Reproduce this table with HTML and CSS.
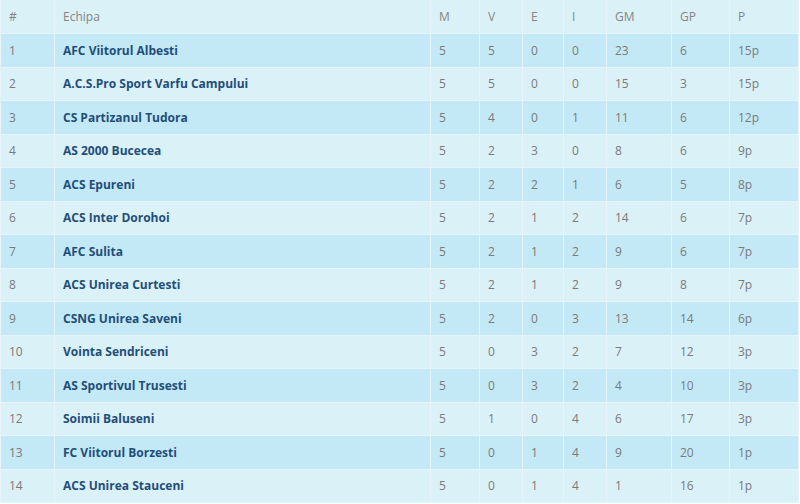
FILE: index.html
```html
<!DOCTYPE html>
<html>
<head>
<meta charset="utf-8">
<link rel="stylesheet" href="styles.css">
</head>
<body>
<table class="standings">
<colgroup>
<col class="c-pos"><col class="c-team"><col class="c-m"><col class="c-v"><col class="c-e"><col class="c-i"><col class="c-gm"><col class="c-gp"><col class="c-p">
</colgroup>
<thead>
<tr><th>#</th><th>Echipa</th><th>M</th><th>V</th><th>E</th><th>I</th><th>GM</th><th>GP</th><th>P</th></tr>
</thead>
<tbody>
<tr><td>1</td><td class="team">AFC Viitorul Albesti</td><td>5</td><td>5</td><td>0</td><td>0</td><td>23</td><td>6</td><td>15p</td></tr>
<tr><td>2</td><td class="team">A.C.S.Pro Sport Varfu Campului</td><td>5</td><td>5</td><td>0</td><td>0</td><td>15</td><td>3</td><td>15p</td></tr>
<tr><td>3</td><td class="team">CS Partizanul Tudora</td><td>5</td><td>4</td><td>0</td><td>1</td><td>11</td><td>6</td><td>12p</td></tr>
<tr><td>4</td><td class="team">AS 2000 Bucecea</td><td>5</td><td>2</td><td>3</td><td>0</td><td>8</td><td>6</td><td>9p</td></tr>
<tr><td>5</td><td class="team">ACS Epureni</td><td>5</td><td>2</td><td>2</td><td>1</td><td>6</td><td>5</td><td>8p</td></tr>
<tr><td>6</td><td class="team">ACS Inter Dorohoi</td><td>5</td><td>2</td><td>1</td><td>2</td><td>14</td><td>6</td><td>7p</td></tr>
<tr><td>7</td><td class="team">AFC Sulita</td><td>5</td><td>2</td><td>1</td><td>2</td><td>9</td><td>6</td><td>7p</td></tr>
<tr><td>8</td><td class="team">ACS Unirea Curtesti</td><td>5</td><td>2</td><td>1</td><td>2</td><td>9</td><td>8</td><td>7p</td></tr>
<tr><td>9</td><td class="team">CSNG Unirea Saveni</td><td>5</td><td>2</td><td>0</td><td>3</td><td>13</td><td>14</td><td>6p</td></tr>
<tr><td>10</td><td class="team">Vointa Sendriceni</td><td>5</td><td>0</td><td>3</td><td>2</td><td>7</td><td>12</td><td>3p</td></tr>
<tr><td>11</td><td class="team">AS Sportivul Trusesti</td><td>5</td><td>0</td><td>3</td><td>2</td><td>4</td><td>10</td><td>3p</td></tr>
<tr><td>12</td><td class="team">Soimii Baluseni</td><td>5</td><td>1</td><td>0</td><td>4</td><td>6</td><td>17</td><td>3p</td></tr>
<tr><td>13</td><td class="team">FC Viitorul Borzesti</td><td>5</td><td>0</td><td>1</td><td>4</td><td>9</td><td>20</td><td>1p</td></tr>
<tr><td>14</td><td class="team">ACS Unirea Stauceni</td><td>5</td><td>0</td><td>1</td><td>4</td><td>1</td><td>16</td><td>1p</td></tr>
</tbody>
</table>
</body>
</html>
```

FILE: styles.css
```css
html, body {
  margin: 0;
  padding: 0;
  background: #ffffff;
}
body {
  font-family: "Open Sans", "Liberation Sans", sans-serif;
  font-size: 12px;
  color: #7a7a7a;
}
.standings {
  width: 798px;
  border-collapse: collapse;
  table-layout: fixed;
}
.c-pos { width: 54px; }
.c-team { width: 376px; }
.c-m { width: 49px; }
.c-v { width: 43px; }
.c-e { width: 41px; }
.c-i { width: 43px; }
.c-gm { width: 65px; }
.c-gp { width: 58px; }
.c-p { width: 69px; }
.standings th,
.standings td {
  height: 33.5px;
  padding: 0 0 0 8px;
  text-align: left;
  vertical-align: middle;
  border: 1px solid #e6f4f9;
  box-sizing: border-box;
  white-space: nowrap;
  overflow: hidden;
}
.standings th {
  font-weight: 400;
  color: #858585;
  background: #dbf1f8;
  border-top: none;
}
.standings tbody tr:nth-child(odd) td {
  background: #c4e9f6;
}
.standings tbody tr:nth-child(even) td {
  background: #dbf1f8;
}
.standings td.team {
  font-weight: 700;
  color: #1f4e79;
}
```
